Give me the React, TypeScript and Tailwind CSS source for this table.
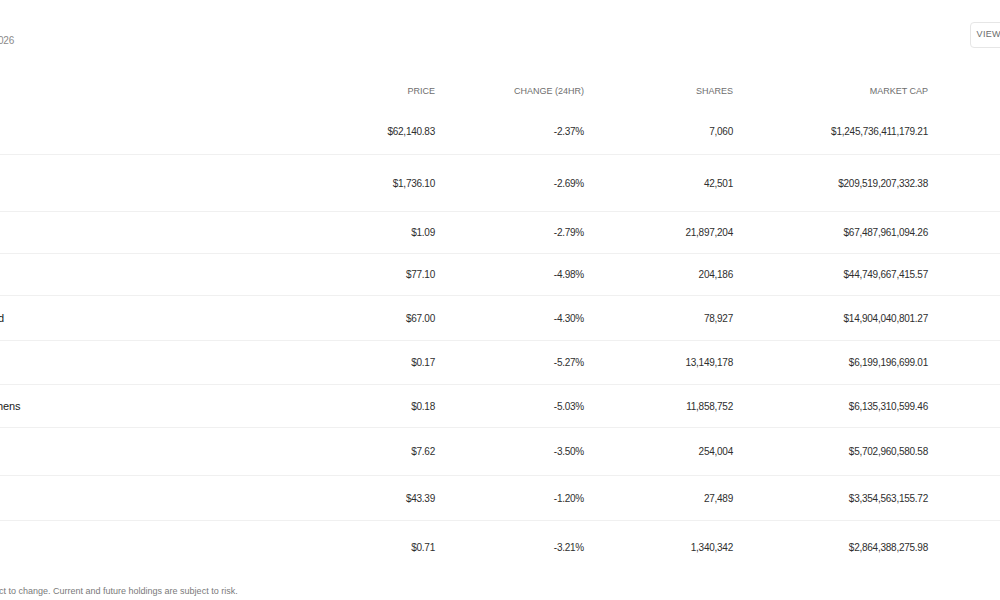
import React from "react";

type Row = {
  name: string;
  nameCls: string;
  h: string;
  price: string;
  change: string;
  shares: string;
  cap: string;
};

const rows: Row[] = [
  { name: "", nameCls: "", h: "h-[46px]", price: "$62,140.83", change: "-2.37%", shares: "7,060", cap: "$1,245,736,411,179.21" },
  { name: "", nameCls: "", h: "h-[57px]", price: "$1,736.10", change: "-2.69%", shares: "42,501", cap: "$209,519,207,332.38" },
  { name: "", nameCls: "", h: "h-[42px]", price: "$1.09", change: "-2.79%", shares: "21,897,204", cap: "$67,487,961,094.26" },
  { name: "", nameCls: "", h: "h-[42px]", price: "$77.10", change: "-4.98%", shares: "204,186", cap: "$44,749,667,415.57" },
  { name: "d", nameCls: "-ml-[2px]", h: "h-[45px]", price: "$67.00", change: "-4.30%", shares: "78,927", cap: "$14,904,040,801.27" },
  { name: "", nameCls: "", h: "h-[44px]", price: "$0.17", change: "-5.27%", shares: "13,149,178", cap: "$6,199,196,699.01" },
  { name: "hens", nameCls: "-ml-[3px]", h: "h-[43px]", price: "$0.18", change: "-5.03%", shares: "11,858,752", cap: "$6,135,310,599.46" },
  { name: "", nameCls: "", h: "h-[48px]", price: "$7.62", change: "-3.50%", shares: "254,004", cap: "$5,702,960,580.58" },
  { name: "", nameCls: "", h: "h-[45px]", price: "$43.39", change: "-1.20%", shares: "27,489", cap: "$3,354,563,155.72" },
  { name: "", nameCls: "", h: "h-[52px]", price: "$0.71", change: "-3.21%", shares: "1,340,342", cap: "$2,864,388,275.98" },
];

export default function App() {
  return (
    <div className="w-[1000px] h-[600px] overflow-hidden bg-white font-['Liberation_Sans',Arial,sans-serif]">
      {/* Top bar */}
      <div className="flex justify-between items-start h-[75px] pt-[22px]">
        <div className="flex flex-col">
          <div className="h-[12px]" />
          <div className="-ml-[2px] mt-[1px] text-[10px] leading-[12px] text-[#8a8a8a] tracking-[-0.2px]">026</div>
        </div>
        <div className="-mr-[27px] shrink-0 h-[26px] px-[6px] flex items-center border border-[#e6e6e6] rounded-[4px] text-[9px] tracking-[0.3px] text-[#6b6b6b] whitespace-nowrap">
          VIEW ALL
        </div>
      </div>

      {/* Header */}
      <div className="grid grid-cols-[1fr_149px_149px_149px_195px] pr-[72px] h-[34px] items-center text-[9px] text-[#6e6e6e]">
        <div />
        <div className="text-right">PRICE</div>
        <div className="text-right">CHANGE (24HR)</div>
        <div className="text-right">SHARES</div>
        <div className="text-right">MARKET CAP</div>
      </div>

      {/* Rows */}
      <div className="flex flex-col">
        {rows.map((r, i) => (
          <div
            key={i}
            className={`grid grid-cols-[1fr_149px_149px_149px_195px] pr-[72px] items-center ${r.h} ${
              i < rows.length - 1 ? "border-b border-[#f0f0f0]" : ""
            } text-[10px] text-[#2e2e2e] tracking-[-0.25px]`}
          >
            <div className="overflow-hidden">
              <span className={`block text-[11px] text-[#1a1a1a] tracking-[-0.1px] ${r.nameCls}`}>{r.name}</span>
            </div>
            <div className="text-right">{r.price}</div>
            <div className="text-right">{r.change}</div>
            <div className="text-right">{r.shares}</div>
            <div className="text-right">{r.cap}</div>
          </div>
        ))}
      </div>

      {/* Footer */}
      <div className="mt-[12px] -ml-[1px] text-[9px] leading-[12px] text-[#7a7a7a] whitespace-nowrap">
        ct to change. Current and future holdings are subject to risk.
      </div>
    </div>
  );
}
